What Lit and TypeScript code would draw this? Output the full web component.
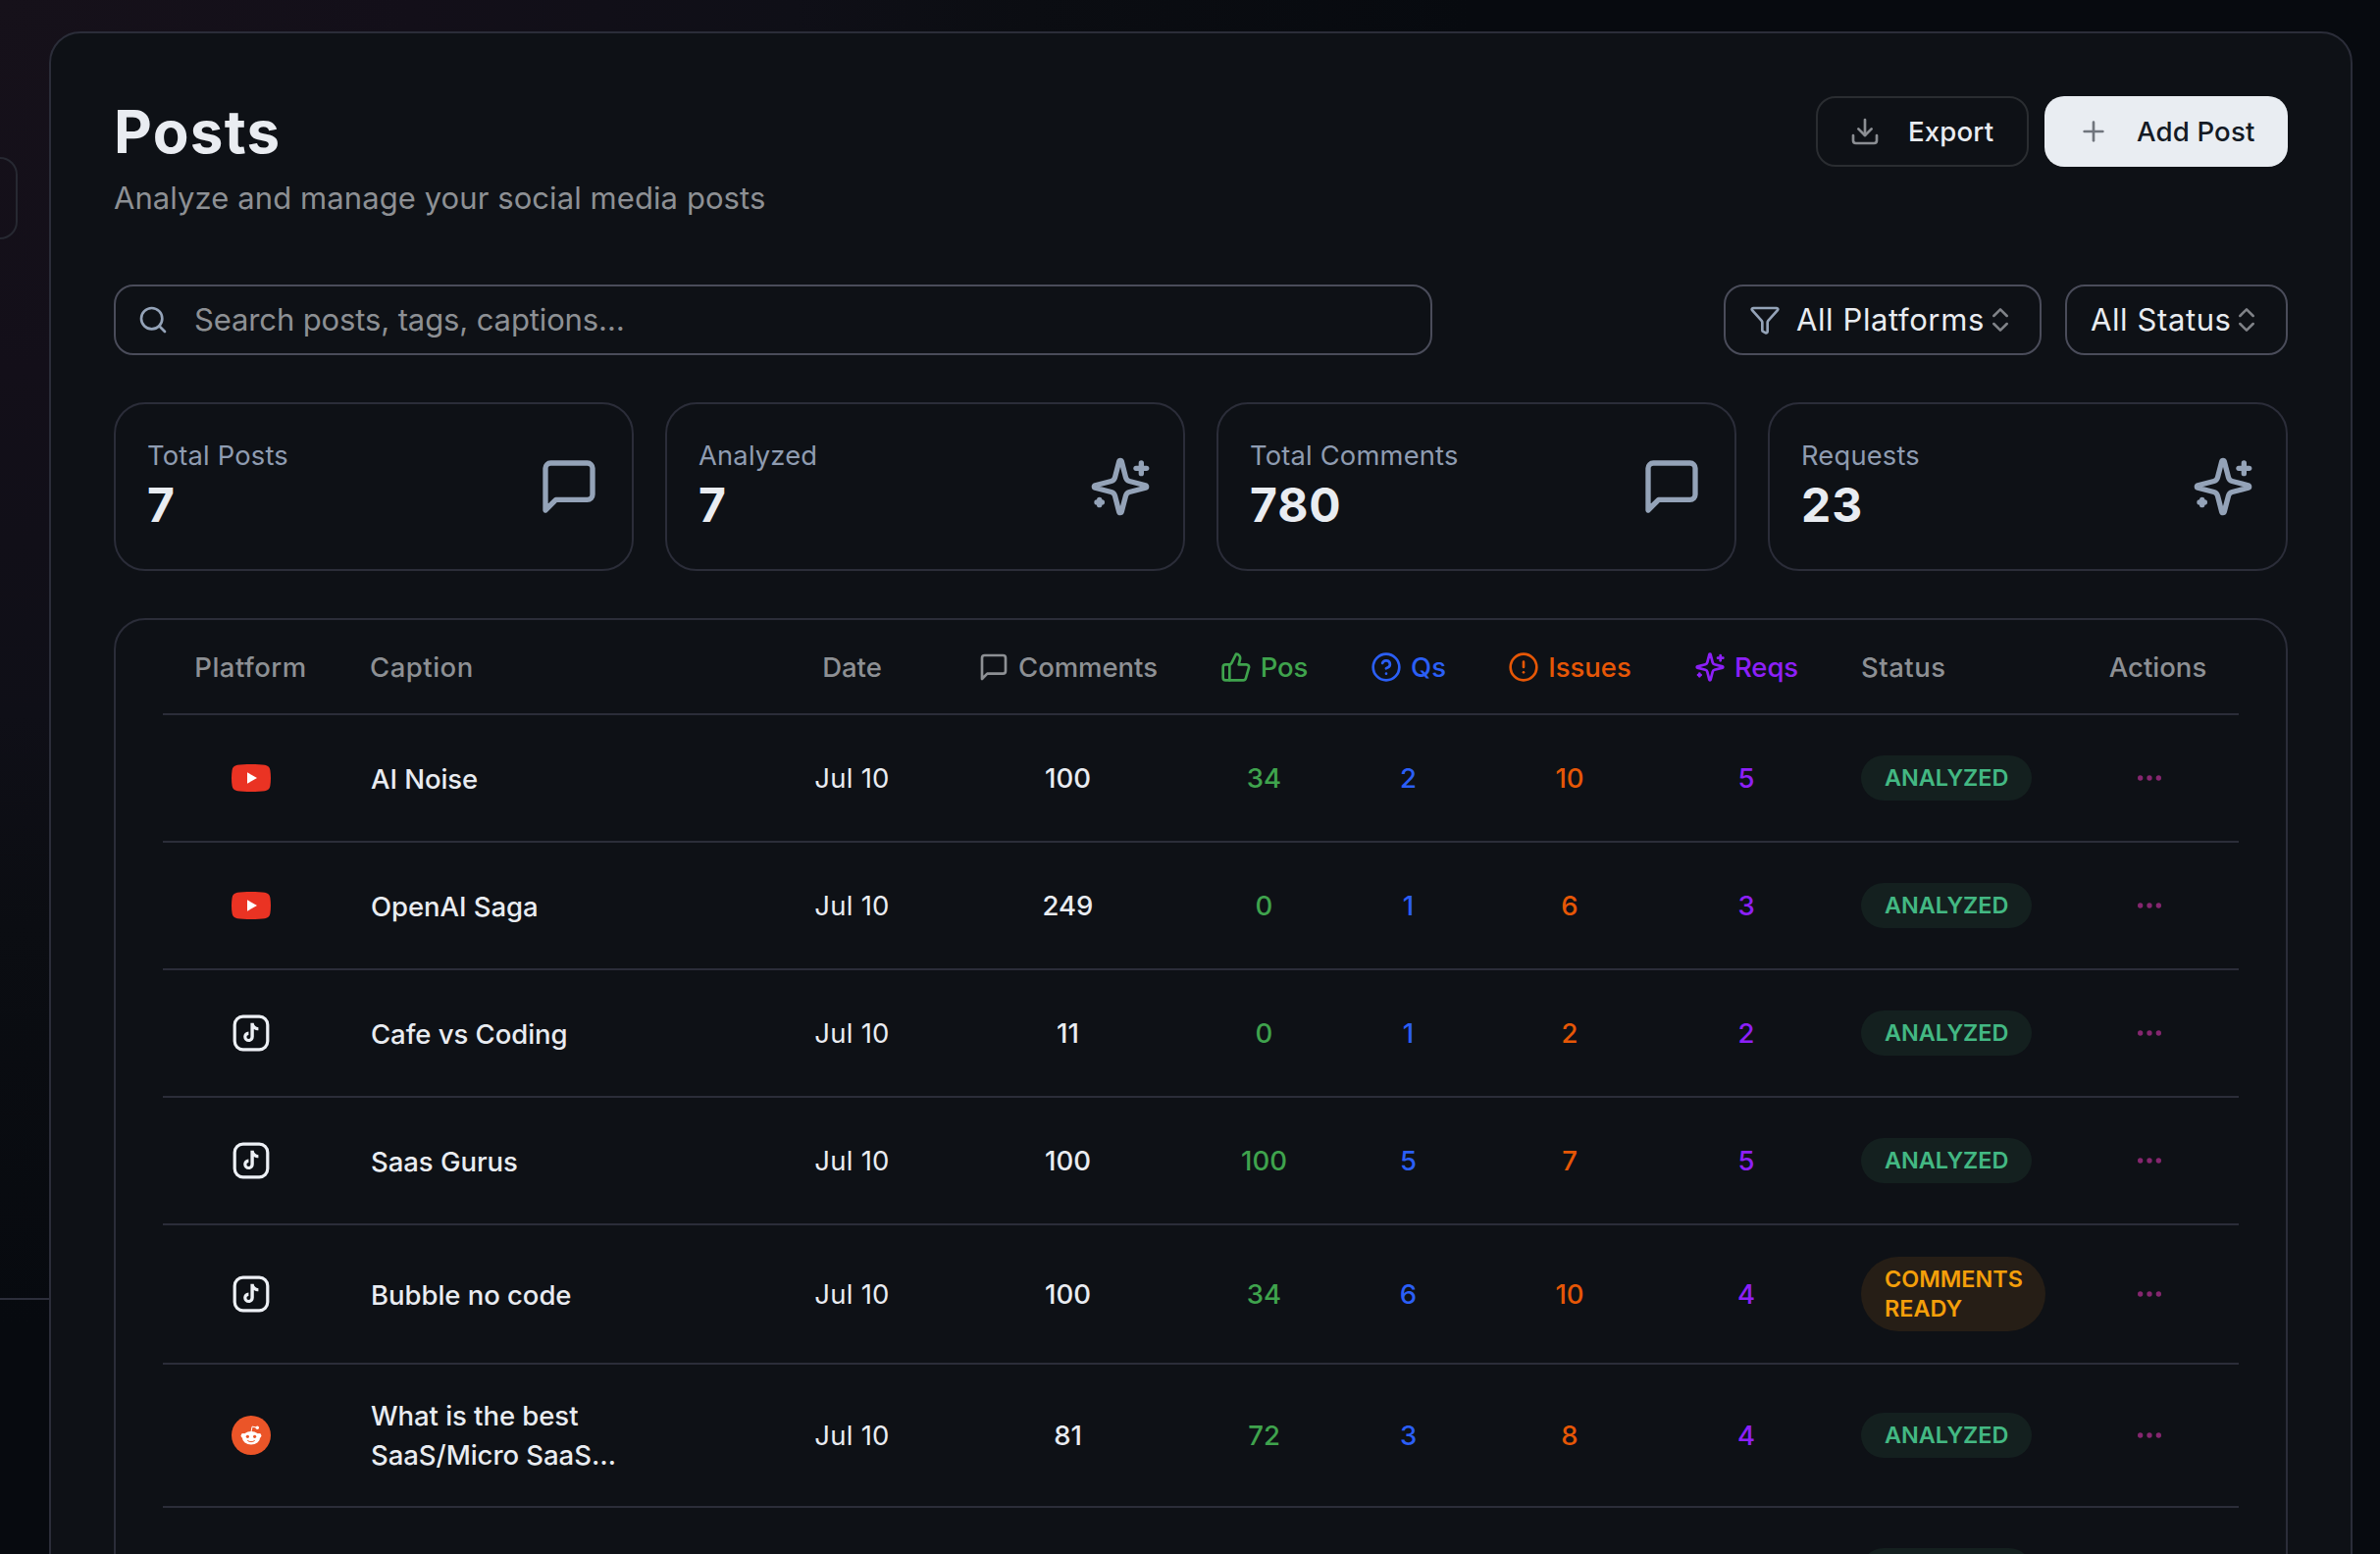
import { LitElement, html, svg, css, nothing } from "lit";
import { customElement, property } from "lit/decorators.js";

const SHAPES: Record<string, unknown> = {
  search: svg`<circle cx="11" cy="11" r="8"/><path d="m21 21-4.3-4.3"/>`,
  download: svg`<path d="M21 15v4a2 2 0 0 1-2 2H5a2 2 0 0 1-2-2v-4"/><path d="m7 10 5 5 5-5"/><path d="M12 15V3"/>`,
  plus: svg`<path d="M5 12h14"/><path d="M12 5v14"/>`,
  filter: svg`<path d="M10 20a1 1 0 0 0 .553.895l2 1A1 1 0 0 0 14 21v-7a2 2 0 0 1 .517-1.341L21.74 4.67A1 1 0 0 0 21 3H3a1 1 0 0 0-.742 1.67l7.225 7.989A2 2 0 0 1 10 14z"/>`,
  chevrons: svg`<path d="m7 15 5 5 5-5"/><path d="m7 9 5-5 5 5"/>`,
  message: svg`<path d="M21 15a2 2 0 0 1-2 2H7l-4 4V5a2 2 0 0 1 2-2h14a2 2 0 0 1 2 2z"/>`,
  sparkles: svg`<path d="M9.937 15.5A2 2 0 0 0 8.5 14.063l-6.135-1.582a.5.5 0 0 1 0-.962L8.5 9.936A2 2 0 0 0 9.937 8.5l1.582-6.135a.5.5 0 0 1 .963 0L14.063 8.5A2 2 0 0 0 15.5 9.937l6.135 1.581a.5.5 0 0 1 0 .964L15.5 14.063a2 2 0 0 0-1.437 1.437l-1.582 6.135a.5.5 0 0 1-.963 0z"/><path d="M20 3v4"/><path d="M22 5h-4"/><path d="M4 17v2"/><path d="M5 18H3"/>`,
  thumb: svg`<path d="M7 10v12"/><path d="M15 5.88 14 10h5.83a2 2 0 0 1 1.92 2.56l-2.33 8A2 2 0 0 1 17.5 22H4a2 2 0 0 1-2-2v-8a2 2 0 0 1 2-2h2.76a2 2 0 0 0 1.79-1.11L12 2a3.13 3.13 0 0 1 3 3.88Z"/>`,
  help: svg`<circle cx="12" cy="12" r="10"/><path d="M9.09 9a3 3 0 0 1 5.83 1c0 2-3 3-3 3"/><path d="M12 17h.01"/>`,
  alert: svg`<circle cx="12" cy="12" r="10"/><path d="M12 8v4"/><path d="M12 16h.01"/>`,
  more: svg`<circle cx="12" cy="12" r="1"/><circle cx="19" cy="12" r="1"/><circle cx="5" cy="12" r="1"/>`,
};

@customElement("line-icon")
export class LineIcon extends LitElement {
  @property() name = "";
  @property({ type: Number }) size = 32;
  @property({ type: Number }) stroke = 2;

  static styles = css`
    :host { display: block; flex: none; }
    .glyph { display: block; fill: none; stroke: currentColor; stroke-linecap: round; stroke-linejoin: round; }
  `;

  render() {
    return html`<svg class="glyph" width=${this.size} height=${this.size} viewBox="0 0 24 24" stroke-width=${this.stroke}>${SHAPES[this.name] ?? nothing}</svg>`;
  }
}

@customElement("platform-icon")
export class PlatformIcon extends LitElement {
  @property() name = "";

  static styles = css`
    :host { display: block; flex: none; }
    .logo { display: block; }
  `;

  render() {
    const art =
      this.name === "youtube"
        ? svg`<path fill="#ea3323" d="M6 6.7C12 5.8 28 5.8 34 6.7c3.2.5 5 2.4 5.4 5.2.8 5 .8 11.200 0 16.200-.4 2.800-2.200 4.700-5.400 5.200-6 .9-22 .9-28 0-3.200-.5-5-2.400-5.400-5.200-.8-5-.8-11.200 0-16.200C1 9.100 2.800 7.200 6 6.700z"/><path fill="#fff" d="M16 14.300v11.400l10-5.700z"/>`
        : this.name === "tiktok"
          ? svg`<rect x="3.200" y="3.200" width="33.600" height="33.600" rx="8.500" fill="none" stroke="#edf0f5" stroke-width="3.200"/><path fill="#edf0f5" d="M22.700 9.800h-3.300v14.200a2 2 0 1 1-2-2.100v-3.400a5.300 5.300 0 1 0 5.400 5.300v-7.900c1.300.9 2.900 1.300 4.600 1.300v-3c-2.600-.1-4.600-2-4.700-4.400z"/>`
          : svg`<circle cx="20" cy="20" r="20" fill="#eb5528"/><path d="M20 16.500l1.100-5.400 5 1.100" fill="none" stroke="#fff" stroke-width="1"/><circle cx="26.300" cy="12.300" r="1.700" fill="#fff"/><circle cx="12" cy="20.400" r="2.400" fill="#fff"/><circle cx="28" cy="20.400" r="2.400" fill="#fff"/><ellipse cx="20" cy="22.700" rx="9" ry="6.700" fill="#fff"/><circle cx="16.400" cy="21.300" r="1.600" fill="#eb5528"/><circle cx="23.600" cy="21.300" r="1.600" fill="#eb5528"/><path d="M16.600 25.600c1.900 1.500 4.900 1.500 6.800 0" fill="none" stroke="#eb5528" stroke-width="1" stroke-linecap="round"/>`;
    return html`<svg class="logo" width="40" height="40" viewBox="0 0 40 40">${art}</svg>`;
  }
}

interface Post {
  platform: string;
  caption: string;
  date: string;
  comments: number;
  pos: number;
  qs: number;
  issues: number;
  reqs: number;
  status: string;
}

const POSTS: Post[] = [
  { platform: "youtube", caption: "AI Noise", date: "Jul 10", comments: 100, pos: 34, qs: 2, issues: 10, reqs: 5, status: "ANALYZED" },
  { platform: "youtube", caption: "OpenAI Saga", date: "Jul 10", comments: 249, pos: 0, qs: 1, issues: 6, reqs: 3, status: "ANALYZED" },
  { platform: "tiktok", caption: "Cafe vs Coding", date: "Jul 10", comments: 11, pos: 0, qs: 1, issues: 2, reqs: 2, status: "ANALYZED" },
  { platform: "tiktok", caption: "Saas Gurus", date: "Jul 10", comments: 100, pos: 100, qs: 5, issues: 7, reqs: 5, status: "ANALYZED" },
  { platform: "tiktok", caption: "Bubble no code", date: "Jul 10", comments: 100, pos: 34, qs: 6, issues: 10, reqs: 4, status: "COMMENTS READY" },
  { platform: "reddit", caption: "What is the best SaaS/Micro SaaS…", date: "Jul 10", comments: 81, pos: 72, qs: 3, issues: 8, reqs: 4, status: "ANALYZED" },
];

const STATS = [
  { label: "Total Posts", value: "7", icon: "message" },
  { label: "Analyzed", value: "7", icon: "sparkles" },
  { label: "Total Comments", value: "780", icon: "message" },
  { label: "Requests", value: "23", icon: "sparkles" },
];

@customElement("app-root")
export class AppRoot extends LitElement {
  static styles = css`
    :host {
      display: block;
      font-family: Inter, "Liberation Sans", sans-serif;
      color: #e9ecf1;
    }
    * { box-sizing: border-box; }
    .shell {
      display: flex;
      height: 1584px;
      overflow: hidden;
      background:
        radial-gradient(ellipse 1500px 1350px at 0 0, #16111a 0%, #130f19 28%, #0f0f17 54%, #0b0d12 70%, rgba(7, 10, 15, 0) 100%),
        #070a0f;
    }
    .rail { width: 50px; flex: none; display: flex; flex-direction: column; padding-top: 160px; }
    .rail-box { width: 18px; height: 84px; border: 2px solid #272932; border-left: 0; border-radius: 0 20px 20px 0; }
    .rail-rule { height: 2px; margin-top: 1079px; background: #2c2e3b; }
    .panel {
      width: 2348px;
      height: 1640px;
      flex: none;
      margin-top: 32px;
      padding: 64px;
      border: 2px solid #2b2d39;
      border-radius: 32px;
      background: #0e1116;
    }
    .head { display: flex; justify-content: space-between; height: 128px; }
    .title { margin: 0; font-size: 60px; line-height: 72px; font-weight: 700; letter-spacing: 1.3px; }
    .sub { margin: 8px 0 0; font-size: 31px; line-height: 48px; color: #8d9094; letter-spacing: 0.08px; }
    .actions { display: flex; gap: 16px; }
    .btn {
      display: flex; align-items: center; height: 72px; border-radius: 20px;
      font-size: 27.6px; font-weight: 500; white-space: nowrap; letter-spacing: 0.15px;
    }
    .btn-icon { width: 32px; margin-right: 28px; color: #8b8e93; }
    .export { width: 217px; padding-left: 32px; border: 2px solid #2a2d31; }
    .add { width: 248px; padding-left: 34px; background: #e9edf2; color: #141a24; }
    .add .btn-icon { color: #70757d; }
    .filters { display: flex; margin-top: 64px; gap: 24px; }
    .field {
      display: flex; align-items: center; height: 72px; border: 2px solid #4a4c5a; border-radius: 20px;
      padding-bottom: 1px; font-size: 31px; white-space: nowrap; letter-spacing: 0.6px;
    }
    .search { width: 1344px; padding-left: 22px; gap: 26px; color: #8d9094; margin-right: auto; letter-spacing: -0.12px; }
    .slate { color: #94a3b8; }
    .platforms { width: 324px; padding-left: 24px; }
    .platforms .slate { margin-right: 16px; }
    .status-select { width: 227px; padding-left: 24px; }
    .chev { color: #808388; }
    .status-select .chev { margin-left: -1px; }
    .stats { display: grid; grid-template-columns: repeat(4, 1fr); gap: 32px; margin-top: 48px; }
    .stat {
      display: flex; justify-content: space-between; align-items: center; height: 172px;
      padding: 32px; border: 2px solid #2b2d39; border-radius: 32px;
    }
    .stat-label { font-size: 27.3px; line-height: 40px; color: #8f9cb1; letter-spacing: 0.2px; }
    .stat-value { font-size: 48px; line-height: 60px; padding-bottom: 2px; font-weight: 700; letter-spacing: 0.9px; }
    .table {
      margin-top: 48px; height: 1100px; padding: 0 48px;
      border: 2px solid #2b2d39; border-radius: 32px;
    }
    .row {
      display: grid;
      grid-template-columns: 179px 426px 195px 245px 155px 139px 190px 170px 252px 165px;
      align-items: center; height: 130px; border-bottom: 2px solid #2b2d39;
      font-size: 27.5px; font-weight: 500;
    }
    .row.header { height: 97px; color: #8d9094; padding-top: 1px; }
    .row.two-badge { height: 142px; }
    .row.two-line { height: 146px; }
    .cell { display: flex; justify-content: center; align-items: center; white-space: nowrap; }
    .cell.left { justify-content: flex-start; padding-left: 32px; }
    .cell.plain { letter-spacing: 0.5px; }
    .with-icon { gap: 9px; letter-spacing: -0.05px; }
    .date { font-weight: 400; letter-spacing: 0.25px; }
    .caption { width: 280px; padding-top: 1px; padding-left: 1px; line-height: 40px; white-space: normal; letter-spacing: -0.05px; }
    .row.two-line .caption { padding-top: 0; }
    .pos { color: #3fa34d; }
    .qs { color: #2b5ff6; }
    .issues { color: #e65706; }
    .reqs { color: #8d20f8; }
    .badge {
      max-width: 188px; padding: 8px 24px; border-radius: 38px; white-space: normal;
      font-size: 23.4px; line-height: 30px; font-weight: 600;
      background: #14201f; color: #43b883;
    }
    .badge.warn { background: #261e16; color: #f49f0a; }
    .badge.blank { width: 174px; height: 46px; }
    .dots { padding-right: 17px; color: #85266f; }
  `;

  private heading(icon: string, label: string, tone: string) {
    return html`<div class="cell with-icon ${tone}"><line-icon name=${icon} size="32" stroke="2"></line-icon><span>${label}</span></div>`;
  }

  private row(p: Post) {
    const warn = p.status !== "ANALYZED";
    const size = warn ? "two-badge" : p.caption.length > 20 ? "two-line" : "";
    return html`
      <div class="row ${size}">
        <div class="cell"><platform-icon name=${p.platform}></platform-icon></div>
        <div class="cell left"><div class="caption">${p.caption}</div></div>
        <div class="cell date">${p.date}</div>
        <div class="cell">${p.comments}</div>
        <div class="cell pos">${p.pos}</div>
        <div class="cell qs">${p.qs}</div>
        <div class="cell issues">${p.issues}</div>
        <div class="cell reqs">${p.reqs}</div>
        <div class="cell left"><div class="badge ${warn ? "warn" : ""}">${p.status}</div></div>
        <div class="cell dots"><line-icon name="more" size="32"></line-icon></div>
      </div>
    `;
  }

  render() {
    return html`
      <div class="shell">
        <div class="rail"><div class="rail-box"></div><div class="rail-rule"></div></div>
        <main class="panel">
          <header class="head">
            <div>
              <h1 class="title">Posts</h1>
              <p class="sub">Analyze and manage your social media posts</p>
            </div>
            <div class="actions">
              <div class="btn export"><line-icon class="btn-icon" name="download" stroke="2"></line-icon><span>Export</span></div>
              <div class="btn add"><line-icon class="btn-icon" name="plus" stroke="2"></line-icon><span>Add Post</span></div>
            </div>
          </header>
          <div class="filters">
            <div class="field search"><line-icon class="slate" name="search" stroke="2"></line-icon><span>Search posts, tags, captions…</span></div>
            <div class="field platforms"><line-icon class="slate" name="filter" stroke="2"></line-icon><span>All Platforms</span><line-icon class="chev" name="chevrons" stroke="1.9"></line-icon></div>
            <div class="field status-select"><span>All Status</span><line-icon class="chev" name="chevrons" stroke="1.9"></line-icon></div>
          </div>
          <div class="stats">
            ${STATS.map(
              (s) => html`<div class="stat">
                <div><div class="stat-label">${s.label}</div><div class="stat-value">${s.value}</div></div>
                <line-icon class="slate" name=${s.icon} size="64"></line-icon>
              </div>`,
            )}
          </div>
          <div class="table">
            <div class="row header">
              <div class="cell plain">Platform</div>
              <div class="cell left plain">Caption</div>
              <div class="cell">Date</div>
              ${this.heading("message", "Comments", "")}
              ${this.heading("thumb", "Pos", "pos")}
              ${this.heading("help", "Qs", "qs")}
              ${this.heading("alert", "Issues", "issues")}
              ${this.heading("sparkles", "Reqs", "reqs")}
              <div class="cell left plain">Status</div>
              <div class="cell">Actions</div>
            </div>
            ${POSTS.map((p) => this.row(p))}
            <div class="row">
              <div class="cell"></div><div class="cell"></div><div class="cell"></div><div class="cell"></div>
              <div class="cell"></div><div class="cell"></div><div class="cell"></div><div class="cell"></div>
              <div class="cell left"><div class="badge blank"></div></div>
              <div class="cell"></div>
            </div>
          </div>
        </main>
      </div>
    `;
  }
}
